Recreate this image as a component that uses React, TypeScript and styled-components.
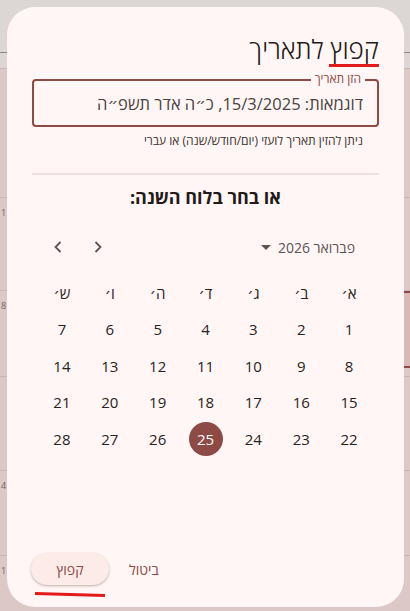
import React from 'react'
import styled, { createGlobalStyle } from 'styled-components'

const GlobalStyle = createGlobalStyle`
  html, body {
    margin: 0;
    padding: 0;
    height: 100%;
    overflow: hidden;
  }
  body {
    font-family: "Open Sans", "DejaVu Sans", sans-serif;
    background: #dcc8c6;
  }
`

// month page underneath the dimmed scrim
const Backdrop = styled.div`
  width: 410px;
  height: 611px;
  display: flex;
  flex-direction: column;
  background: #dcc8c6;
`

const AppBar = styled.div`
  height: 52px;
  background: #dcd7d5;
  border-bottom: 1px solid #8d8786;
  flex-shrink: 0;
`

const SubBar = styled.div`
  height: 15px;
  background: #dcd7d5;
  flex-shrink: 0;
`

const WeekRow = styled.div<{ $h: number }>`
  height: ${(p) => p.$h}px;
  flex-shrink: 0;
  border-top: 1px solid #c7b6b4;
  display: flex;
  justify-content: space-between;
  font-size: 9px;
  color: #6d6362;
  padding: 8px 0 0;
  box-sizing: border-box;
`

const EdgeDay = styled.span`
  padding-left: 1px;
`

const EdgeCell = styled.span<{ $marked?: boolean }>`
  width: 8px;
  height: 100%;
  margin-top: -8px;
  box-sizing: border-box;
  border-top: ${(p) => (p.$marked ? '2px solid #8e4a45' : 'none')};
  border-bottom: ${(p) => (p.$marked ? '2px solid #8e4a45' : 'none')};
  background: ${(p) => (p.$marked ? '#d9b9b5' : 'transparent')};
`

const Dialog = styled.div`
  position: fixed;
  left: 7px;
  top: 7px;
  width: 397px;
  height: 600px;
  box-sizing: border-box;
  border-radius: 28px;
  background: #fff6f5;
  direction: rtl;
  display: flex;
  flex-direction: column;
  padding: 25px 25px 22px;
`

const Title = styled.h2`
  margin: 0;
  font-size: 26px;
  line-height: 34px;
  font-weight: 300;
  color: #231a19;
`

const Marked = styled.span`
  position: relative;
  &::after {
    content: '';
    position: absolute;
    left: -2px;
    right: 0;
    bottom: 0;
    height: 3px;
    background: #e11b1b;
  }
`

const Field = styled.div`
  position: relative;
  margin-top: 13px;
  height: 48px;
  box-sizing: border-box;
  border: 2px solid #8e4a45;
  border-radius: 4px;
  display: flex;
  align-items: center;
  padding: 0 14px;
`

const FieldLabel = styled.label`
  position: absolute;
  top: -9px;
  right: 12px;
  padding: 0 4px;
  font-size: 12px;
  line-height: 14px;
  color: #8e4a45;
  background: #fff6f5;
`

const DateInput = styled.input`
  flex: 1;
  border: 0;
  outline: 0;
  background: transparent;
  direction: rtl;
  font-family: "Open Sans", "DejaVu Sans", sans-serif;
  font-size: 16.5px;
  padding: 0;
  color: #201a19;
  &::placeholder {
    color: #4a4342;
    opacity: 1;
  }
`

const Helper = styled.div`
  font-size: 12px;
  line-height: 18px;
  color: #3a3231;
  padding: 5px 16px 0;
`

const Divider = styled.hr`
  margin: 23px 0 10px;
  border: 0;
  height: 2px;
  background: #efe1df;
`

const Heading = styled.h3`
  margin: 0;
  text-align: center;
  font-size: 18px;
  line-height: 24px;
  font-weight: 700;
  color: #231a19;
`

const MonthBar = styled.div`
  height: 36px;
  margin-top: 20px;
  display: flex;
  align-items: center;
  justify-content: space-between;
  padding: 0 24px 0 14px;
`

const MonthPicker = styled.div`
  display: flex;
  align-items: center;
  gap: 7px;
  font-size: 14px;
  color: #5c5453;
`

const Caret = styled.span`
  width: 0;
  height: 0;
  border-left: 5px solid transparent;
  border-right: 5px solid transparent;
  border-top: 5px solid #5c5453;
  margin-top: 1px;
`

const NavGroup = styled.div`
  display: flex;
  direction: ltr;
  gap: 16px;
`

const NavButton = styled.button`
  width: 24px;
  height: 24px;
  border: 0;
  padding: 0;
  background: transparent;
  display: flex;
  align-items: center;
  justify-content: center;
  color: #5c5453;
`

const Grid = styled.div`
  margin: 9.5px auto 0;
  width: 335px;
  display: grid;
  grid-template-columns: repeat(7, 1fr);
  grid-auto-rows: 36.5px;
`

const WeekDay = styled.div`
  display: flex;
  align-items: center;
  justify-content: center;
  font-size: 15px;
  color: #2a2221;
`

const Day = styled.div<{ $selected?: boolean }>`
  display: flex;
  align-items: center;
  justify-content: center;
  font-size: 15px;
  color: ${(p) => (p.$selected ? '#ffffff' : '#2a2221')};
  & > span {
    width: 34px;
    height: 34px;
    border-radius: 50%;
    display: flex;
    align-items: center;
    justify-content: center;
    background: ${(p) => (p.$selected ? '#8e4a45' : 'transparent')};
  }
`

const Actions = styled.div`
  margin-top: auto;
  display: flex;
  justify-content: flex-end;
  align-items: center;
  gap: 8px;
  margin-left: -1px;
`

const TextButton = styled.button`
  height: 32px;
  border: 0;
  background: transparent;
  padding: 0 12px;
  font-family: "Open Sans", "DejaVu Sans", sans-serif;
  font-size: 14px;
  color: #8e4a45;
`

const TonalButton = styled(TextButton)`
  position: relative;
  width: 78px;
  border-radius: 16px;
  background: #fdebe8;
  box-shadow: 0 1px 2px rgba(80, 40, 38, 0.25), 0 1px 3px rgba(80, 40, 38, 0.12);
  &::after {
    content: '';
    position: absolute;
    left: 4px;
    top: 40px;
    width: 70px;
    height: 3px;
    background: #e11b1b;
    transform: rotate(1.6deg);
  }
`

const weekDays = ['א׳', 'ב׳', 'ג׳', 'ד׳', 'ה׳', 'ו׳', 'ש׳']
const days = Array.from({ length: 28 }, (_, i) => i + 1)

const backRows = [
  { h: 129, day: '' },
  { h: 93, day: '1' },
  { h: 86, day: '8', marked: true },
  { h: 94, day: '' },
  { h: 85, day: '4' },
  { h: 60, day: '1' },
]

export default function App() {
  return (
    <>
      <GlobalStyle />
      <Backdrop>
        <AppBar />
        <SubBar />
        {backRows.map((r, i) => (
          <WeekRow key={i} $h={r.h}>
            <EdgeDay>{r.day}</EdgeDay>
            <EdgeCell $marked={r.marked} />
          </WeekRow>
        ))}
      </Backdrop>

      <Dialog>
        <Title>
          <Marked>קפוץ</Marked> לתאריך
        </Title>

        <Field>
          <FieldLabel htmlFor="jump-date">הזן תאריך</FieldLabel>
          <DateInput id="jump-date" placeholder="דוגמאות: 15/3/2025, כ״ה אדר תשפ״ה" />
        </Field>
        <Helper>ניתן להזין תאריך לועזי (יום/חודש/שנה) או עברי</Helper>

        <Divider />
        <Heading>או בחר בלוח השנה:</Heading>

        <MonthBar>
          <MonthPicker>
            <span>פברואר 2026</span>
            <Caret />
          </MonthPicker>
          <NavGroup>
            <NavButton aria-label="prev">
              <svg width="10" height="14" viewBox="0 0 10 14">
                <path d="M7.5 2 L2.5 7 L7.5 12" fill="none" stroke="currentColor" strokeWidth="1.8" />
              </svg>
            </NavButton>
            <NavButton aria-label="next">
              <svg width="10" height="14" viewBox="0 0 10 14">
                <path d="M2.5 2 L7.5 7 L2.5 12" fill="none" stroke="currentColor" strokeWidth="1.8" />
              </svg>
            </NavButton>
          </NavGroup>
        </MonthBar>

        <Grid>
          {weekDays.map((d) => (
            <WeekDay key={d}>{d}</WeekDay>
          ))}
          {days.map((d) => (
            <Day key={d} $selected={d === 25}>
              <span>{d}</span>
            </Day>
          ))}
        </Grid>

        <Actions>
          <TextButton>ביטול</TextButton>
          <TonalButton>קפוץ</TonalButton>
        </Actions>
      </Dialog>
    </>
  )
}
